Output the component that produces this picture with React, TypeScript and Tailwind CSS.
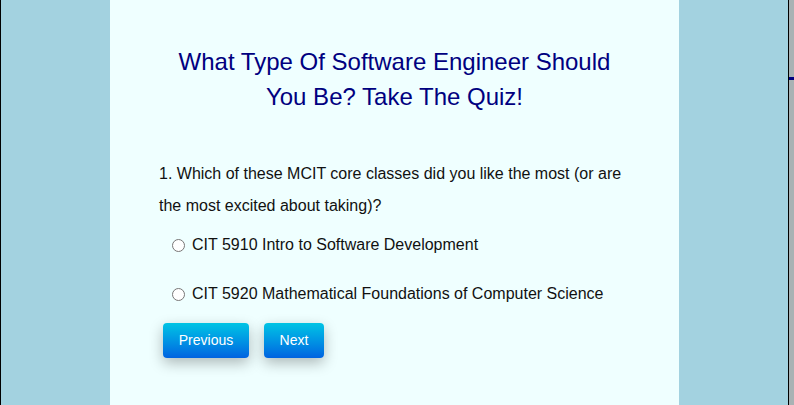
import { useState } from 'react';

const options = [
  'CIT 5910 Intro to Software Development',
  'CIT 5920 Mathematical Foundations of Computer Science',
];

export default function App() {
  const [picked, setPicked] = useState<number | null>(null);

  return (
    <div className="flex h-[405px] w-full overflow-hidden font-['Liberation_Sans',Arial,sans-serif]">
      <div className="w-px bg-black" />
      <div className="flex flex-1 justify-center bg-[#a3d2e0]">
        <div className="w-[569px] bg-[#efffff] pt-[44px]">
          <h1 className="px-[50px] text-center text-[24px] leading-[35px] text-[#000080]">
            What Type Of Software Engineer Should You Be? Take The Quiz!
          </h1>

          <div className="mt-[44px] pl-[49px] pr-[40px]">
            <p className="text-[16px] leading-[32px] text-[#111]">
              1. Which of these MCIT core classes did you like the most (or are the most excited about taking)?
            </p>

            <div className="mt-[13px] flex flex-col gap-[29px] pl-[13px]">
              {options.map((opt, i) => (
                <label key={i} className="flex h-[20px] items-center gap-[7px] text-[16px] text-[#111]">
                  <input
                    type="radio"
                    name="q1"
                    checked={picked === i}
                    onChange={() => setPicked(i)}
                    className="m-0 h-[13px] w-[13px]"
                  />
                  {opt}
                </label>
              ))}
            </div>

            <div className="mt-[19px] flex gap-[15px] pl-[4px]">
              <button className="h-[35px] w-[86px] rounded-[4px] bg-gradient-to-b from-[#00c4e4] to-[#0062e0] text-[14px] text-white shadow-[0_5px_14px_rgba(0,0,0,0.28)]">
                Previous
              </button>
              <button className="h-[35px] w-[60px] rounded-[4px] bg-gradient-to-b from-[#00c4e4] to-[#0062e0] text-[14px] text-white shadow-[0_5px_14px_rgba(0,0,0,0.28)]">
                Next
              </button>
            </div>
          </div>
        </div>
      </div>
      <div className="w-px bg-black" />
      <div className="relative w-[5px] bg-[#a9b2b4]">
        <div className="absolute left-0 top-[77px] h-[3px] w-[5px] bg-[#000080]" />
      </div>
    </div>
  );
}
